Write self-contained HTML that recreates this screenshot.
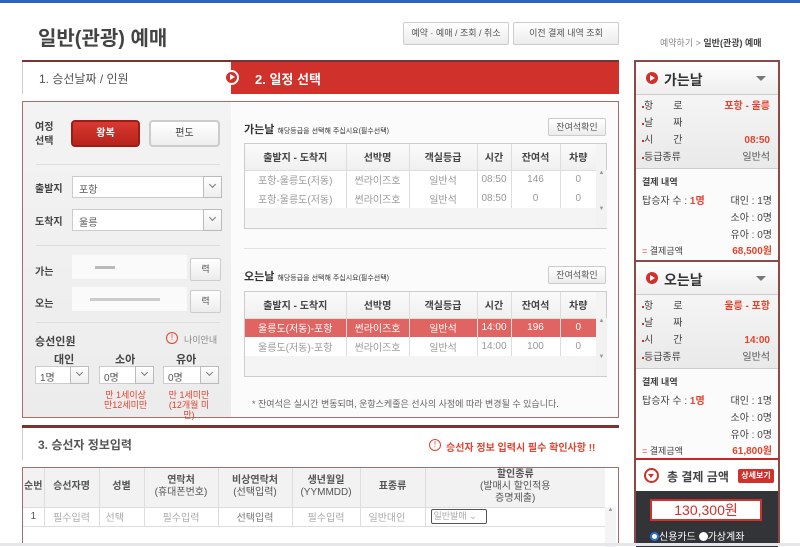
<!DOCTYPE html>
<html><head><meta charset="utf-8">
<style>
*{margin:0;padding:0;box-sizing:border-box}
body{width:800px;height:546px;overflow:hidden;background:#fff;font-family:"Liberation Sans","Noto Sans CJK KR",sans-serif;color:#444;position:relative;font-size:11px}
.a{position:absolute}
.btn{position:absolute;border:1px solid #ccc;border-radius:2px;background:linear-gradient(#fff,#ececec);text-align:center;font-size:9px;color:#555}
.sel{position:absolute;height:22px;border:1px solid #ccc;background:#fff;font-size:10px;color:#555;padding:4px 6px}
.sel:after{content:"";position:absolute;right:-1px;top:-1px;width:17px;bottom:-1px;border:1px solid #bbb;background:linear-gradient(#fff,#eee)}
.sel i{position:absolute;right:6px;top:5px;width:5px;height:5px;border-right:1px solid #777;border-bottom:1px solid #777;transform:rotate(45deg);z-index:2}
table{border-collapse:collapse}
.tb{position:absolute;border:1px solid #ccc;background:#f4f4f4}
.tb td{font-size:10px;color:#999;text-align:center;height:19px;border-left:1px solid #ddd;background:#fff}
.tb th{font-size:10px;color:#444;font-weight:bold;height:26px;border-left:1px solid #ddd;background:linear-gradient(#fafafa,#f0f0f0);border-bottom:1px solid #ddd}
.sb{position:absolute;width:11px;background:#f2f2f2;font-size:6px;color:#999;text-align:center}
.side{position:absolute;left:634px;width:146px;border-left:2px solid #8a4a48;border-right:2px solid #8a4a48}
.sh{height:33px;background:linear-gradient(#fff,#eee);border-bottom:1px solid #ccc;font-size:14px;font-weight:bold;color:#333;padding:8px 0 0 28px;position:relative}
.sh .c{position:absolute;left:10px;top:10px;width:12px;height:12px;border-radius:50%;background:#d0312a}
.sh .c:after{content:"";position:absolute;left:4px;top:3px;border-left:5px solid #fff;border-top:3px solid transparent;border-bottom:3px solid transparent}
.sh .t{position:absolute;right:12px;top:14px;border-top:5px solid #777;border-left:5px solid transparent;border-right:5px solid transparent}
.info{background:linear-gradient(#f5f5f5,#e9e9e9);height:74px;border-bottom:1px solid #ccc;padding:3px 8px;font-size:10px;position:relative}
.info div{height:17px;line-height:17px;position:relative}
.info div:before{content:"";position:absolute;left:-2px;top:8px;width:2px;height:2px;background:#d0312a}
.info b{position:absolute;right:0;font-weight:bold;color:#e0442f}
.info span{position:absolute;right:0;color:#555}
.pay{background:#fbfbfb;height:91px;padding:5px 6px;font-size:10px;position:relative}
.pay div{position:absolute}
.red{color:#e0442f}
</style></head><body>
<div class="a" style="left:0;top:0;width:800px;height:3px;background:#2d62c4"></div>
<div class="a" style="left:38px;top:22px;font-size:20px;font-weight:bold;color:#444">일반(관광) 예매</div>
<div class="btn" style="left:403px;top:22px;width:106px;height:23px;line-height:21px">예약 · 예매 / 조회 / 취소</div>
<div class="btn" style="left:513px;top:22px;width:106px;height:23px;line-height:21px">이전 결제 내역 조회</div>
<div class="a" style="left:660px;top:36px;font-size:9px;color:#888">예약하기 &gt; <b style="color:#444">일반(관광) 예매</b></div>

<div class="a" style="left:22px;top:60px;width:597px;height:34px;border-top:2px solid #7a3330"></div>
<div class="a" style="left:22px;top:62px;width:209px;height:32px;background:#fff;border-left:1px solid #ccc;font-size:12px;color:#555;padding:8px 0 0 16px">1. 승선날짜 / 인원</div>
<div class="a" style="left:231px;top:62px;width:388px;height:32px;background:#d0312a;color:#fff;font-size:13px;font-weight:bold;padding:7px 0 0 24px">2. 일정 선택</div>
<div class="a" style="left:224px;top:70px;width:15px;height:15px;border-radius:50%;background:#d0312a;border:2px solid #fff"></div>
<div class="a" style="left:230px;top:74px;border-left:5px solid #fff;border-top:3.5px solid transparent;border-bottom:3.5px solid transparent"></div>

<div class="a" style="left:22px;top:101px;width:210px;height:317px;border:1px solid #a46e6b;background:linear-gradient(#f3f3f3,#ececec)"></div>
<div class="a" style="left:35px;top:121px;font-size:10px;font-weight:bold;line-height:14px">여정<br>선택</div>
<div class="a" style="left:71px;top:120px;width:69px;height:27px;border-radius:4px;background:linear-gradient(#d83a30,#b8231c);border:2px solid #9a1e18;color:#fff;font-size:10px;font-weight:bold;text-align:center;line-height:23px">왕복</div>
<div class="a" style="left:149px;top:120px;width:71px;height:27px;border-radius:4px;background:linear-gradient(#fff,#eee);border:2px solid #ccc;font-size:10px;text-align:center;line-height:23px">편도</div>
<div class="a" style="left:36px;top:164px;width:184px;height:1px;background:#ddd"></div>
<div class="a" style="left:35px;top:180px;font-size:10px;font-weight:bold">출발지</div>
<div class="sel" style="left:72px;top:176px;width:150px">포항<i></i></div>
<div class="a" style="left:35px;top:213px;font-size:10px;font-weight:bold">도착지</div>
<div class="sel" style="left:72px;top:209px;width:150px">울릉<i></i></div>
<div class="a" style="left:36px;top:245px;width:184px;height:1px;background:#ddd"></div>
<div class="a" style="left:35px;top:263px;font-size:10px;font-weight:bold">가는</div>
<div class="a" style="left:72px;top:255px;width:115px;height:24px;background:#fafafa"></div>
<div class="a" style="left:95px;top:266px;width:20px;height:3px;background:#bbb"></div>
<div class="btn" style="left:190px;top:258px;width:31px;height:23px;line-height:21px">력</div>
<div class="a" style="left:35px;top:295px;font-size:10px;font-weight:bold">오는</div>
<div class="a" style="left:72px;top:287px;width:115px;height:24px;background:#fafafa"></div>
<div class="a" style="left:90px;top:298px;width:70px;height:3px;background:#ccc"></div>
<div class="btn" style="left:190px;top:290px;width:31px;height:23px;line-height:21px">력</div>
<div class="a" style="left:36px;top:322px;width:184px;height:1px;background:#ddd"></div>
<div class="a" style="left:35px;top:333px;font-size:11px;font-weight:bold">승선인원</div>
<div class="a" style="left:166px;top:332px;width:12px;height:12px;border-radius:50%;border:1px solid #e0442f;color:#e0442f;font-size:8px;text-align:center;line-height:10px">!</div>
<div class="a" style="left:184px;top:333px;font-size:9px;color:#888">나이안내</div>
<div class="a" style="left:54px;top:351px;font-size:11px;font-weight:bold">대인</div>
<div class="a" style="left:115px;top:351px;font-size:11px;font-weight:bold">소아</div>
<div class="a" style="left:176px;top:351px;font-size:11px;font-weight:bold">유아</div>
<div class="sel" style="left:35px;top:366px;width:54px;height:18px;padding:2px 4px">1명<i style="top:3px"></i></div>
<div class="sel" style="left:99px;top:366px;width:55px;height:18px;padding:2px 4px">0명<i style="top:3px"></i></div>
<div class="sel" style="left:163px;top:366px;width:56px;height:18px;padding:2px 4px">0명<i style="top:3px"></i></div>
<div class="a" style="left:104px;top:390px;font-size:9px;color:#e0442f;line-height:10px;text-align:center">만 1세이상<br>만12세미만</div>
<div class="a" style="left:165px;top:390px;font-size:9px;color:#e0442f;line-height:10px;text-align:center;width:48px">만 1세미만<br>(12개월 미<br>만)</div>

<div class="a" style="left:231px;top:101px;width:388px;height:317px;border:1px solid #a46e6b;border-left:none;background:#fbfbfb"></div>
<div class="a" style="left:244px;top:121px;font-size:11px;font-weight:bold;color:#333">가는날 <span style="font-size:7px;font-weight:normal">해당등급을 선택해 주십시요(필수선택)</span></div>
<div class="btn" style="left:548px;top:118px;width:58px;height:18px;line-height:16px">잔여석확인</div>
<div class="tb" style="left:244px;top:143px;width:363px;height:86px">
<table style="width:351px"><tr><th style="width:101px;border-left:none">출발지 - 도착지</th><th style="width:63px">선박명</th><th style="width:68px">객실등급</th><th style="width:34px">시간</th><th style="width:49px">잔여석</th><th>차량</th></tr>
<tr><td style="border-left:none">포항-울릉도(저동)</td><td>썬라이즈호</td><td>일반석</td><td>08:50</td><td>146</td><td>0</td></tr>
<tr><td style="border-left:none">포항-울릉도(저동)</td><td>썬라이즈호</td><td>일반석</td><td>08:50</td><td>0</td><td>0</td></tr></table>
<div class="sb" style="left:351px;top:26px;height:58px">▲<br><br><br><br><br><br>▼</div></div>
<div class="a" style="left:244px;top:248px;width:362px;height:1px;background:#e2e2e2"></div>
<div class="a" style="left:244px;top:268px;font-size:11px;font-weight:bold;color:#333">오는날 <span style="font-size:7px;font-weight:normal">해당등급을 선택해 주십시요(필수선택)</span></div>
<div class="btn" style="left:548px;top:266px;width:58px;height:18px;line-height:16px">잔여석확인</div>
<div class="tb" style="left:244px;top:291px;width:363px;height:86px">
<table style="width:351px"><tr><th style="width:101px;border-left:none">출발지 - 도착지</th><th style="width:63px">선박명</th><th style="width:68px">객실등급</th><th style="width:34px">시간</th><th style="width:49px">잔여석</th><th>차량</th></tr>
<tr><td style="border-left:none;background:#e06461;color:#fff">울릉도(저동)-포항</td><td style="background:#e06461;color:#fff">썬라이즈호</td><td style="background:#e06461;color:#fff">일반석</td><td style="background:#e06461;color:#fff">14:00</td><td style="background:#e06461;color:#fff">196</td><td style="background:#e06461;color:#fff">0</td></tr>
<tr><td style="border-left:none">울릉도(저동)-포항</td><td>썬라이즈호</td><td>일반석</td><td>14:00</td><td>100</td><td>0</td></tr></table>
<div class="sb" style="left:351px;top:26px;height:58px">▲<br><br><br><br><br><br>▼</div></div>
<div class="a" style="left:252px;top:397px;font-size:9px;color:#666">* 잔여석은 실시간 변동되며, 운항스케줄은 선사의 사정에 따라 변경될 수 있습니다.</div>

<div class="a" style="left:22px;top:425px;width:597px;height:3px;background:#7a3330"></div>
<div class="a" style="left:22px;top:428px;width:1px;height:32px;background:#ccc"></div>
<div class="a" style="left:38px;top:436px;font-size:12px;font-weight:bold;color:#555">3. 승선자 정보입력</div>
<div class="a" style="left:429px;top:439px;width:12px;height:12px;border-radius:50%;border:1px solid #e0442f;color:#e0442f;font-size:8px;text-align:center;line-height:10px">!</div>
<div class="a" style="left:446px;top:439px;font-size:10px;font-weight:bold;color:#e0442f">승선자 정보 입력시 필수 확인사항 !!</div>
<div class="a" style="left:22px;top:467px;width:597px;height:79px;border:1px solid #a46e6b;border-bottom:none;background:#fff">
<table style="width:582px">
<tr style="height:39px;background:#f2f2f2;font-size:10px;font-weight:bold;color:#555;text-align:center;line-height:12px">
<td style="width:21px">순번</td><td style="width:55px;border-left:1px solid #ddd">승선자명</td><td style="width:45px;border-left:1px solid #ddd">성별</td><td style="width:74px;border-left:1px solid #ddd">연락처<br><span style="font-weight:normal">(휴대폰번호)</span></td><td style="width:74px;border-left:1px solid #ddd">비상연락처<br><span style="font-weight:normal">(선택입력)</span></td><td style="width:68px;border-left:1px solid #ddd">생년월일<br><span style="font-weight:normal">(YYMMDD)</span></td><td style="width:65px;border-left:1px solid #ddd">표종류</td><td style="border-left:1px solid #ddd">할인종류<br><span style="font-weight:normal">(발매시 할인적용<br>증명제출)</span></td></tr>
<tr style="height:19px;font-size:10px;color:#aaa;text-align:center;border-top:1px solid #ddd;border-bottom:1px solid #ddd">
<td style="color:#555">1</td><td style="border-left:1px solid #ddd">필수입력</td><td style="border-left:1px solid #ddd;text-align:left;padding-left:6px">선택</td><td style="border-left:1px solid #ddd">필수입력</td><td style="border-left:1px solid #ddd;color:#777">선택입력</td><td style="border-left:1px solid #ddd">필수입력</td><td style="border-left:1px solid #ddd;text-align:left;padding-left:8px">일반대인</td><td style="border-left:1px solid #ddd;text-align:left;padding-left:5px"><span style="display:inline-block;width:56px;height:15px;border:1px solid #555;border-radius:2px;font-size:9px;line-height:13px;padding-left:2px">일반발매 ⌄</span></td></tr></table>
<div class="sb" style="left:582px;top:39px;height:40px;background:#f4f4f4">▲</div></div>

<div class="side" style="top:60px;height:200px;border-top:2px solid #8a4a48">
<div class="sh"><span class="c"></span>가는날<span class="t"></span></div>
<div class="info"><div>항　　로<b>포항 - 울릉</b></div><div>날　　짜</div><div>시　　간<b>08:50</b></div><div>등급종류<span>일반석</span></div></div>
<div class="pay"><div style="left:6px;top:6px;font-weight:bold;font-size:9px">결제 내역</div><div style="left:6px;top:23px">탑승자 수 : <b class="red">1명</b></div><div style="right:6px;top:23px">대인 : 1명</div><div style="right:6px;top:40px">소아 : 0명</div><div style="right:6px;top:57px">유아 : 0명</div><div style="left:6px;top:75px;font-size:9px"><span class="red">=</span> 결제금액</div><div style="right:6px;top:73px;font-weight:bold" class="red">68,500원</div></div>
</div>
<div class="side" style="top:260px;height:198px;border-top:2px solid #8a4a48">
<div class="sh"><span class="c"></span>오는날<span class="t"></span></div>
<div class="info"><div>항　　로<b>울릉 - 포항</b></div><div>날　　짜</div><div>시　　간<b>14:00</b></div><div>등급종류<span>일반석</span></div></div>
<div class="pay"><div style="left:6px;top:6px;font-weight:bold;font-size:9px">결제 내역</div><div style="left:6px;top:23px">탑승자 수 : <b class="red">1명</b></div><div style="right:6px;top:23px">대인 : 1명</div><div style="right:6px;top:40px">소아 : 0명</div><div style="right:6px;top:57px">유아 : 0명</div><div style="left:6px;top:75px;font-size:9px"><span class="red">=</span> 결제금액</div><div style="right:6px;top:73px;font-weight:bold" class="red">61,800원</div></div>
</div>
<div class="side" style="top:458px;height:88px;border-top:2px solid #c02a24">
<div style="height:31px;background:#fff;position:relative;font-size:12px;font-weight:bold;color:#444;padding:8px 0 0 31px">총 결제 금액
<span style="position:absolute;left:8px;top:8px;width:15px;height:15px;border-radius:50%;border:2px solid #d0312a"></span>
<span style="position:absolute;left:12px;top:14px;border-top:4px solid #d0312a;border-left:3.5px solid transparent;border-right:3.5px solid transparent"></span>
<span style="position:absolute;right:4px;top:9px;width:36px;height:14px;background:#d0312a;border-radius:2px;color:#fff;font-size:8px;text-align:center;line-height:14px">상세보기</span></div>
<div style="height:56px;background:#333438;position:relative">
<div style="position:absolute;left:14px;top:8px;width:112px;height:22px;background:#fff;border:2px solid #d0312a;color:#d0312a;font-size:14px;text-align:center;line-height:18px">130,300원</div>
<div style="position:absolute;left:14px;top:37px;font-size:10px;color:#fff"><span style="display:inline-block;width:9px;height:9px;border-radius:50%;background:#fff;border:2px solid #2a6fe0;vertical-align:-1px"></span>신용카드 <span style="display:inline-block;width:9px;height:9px;border-radius:50%;background:#fff;vertical-align:-1px"></span>가상계좌</div>
</div></div>
<div class="a" style="left:0;top:543px;width:800px;height:3px;background:#e4e6ec"></div>
</body></html>
